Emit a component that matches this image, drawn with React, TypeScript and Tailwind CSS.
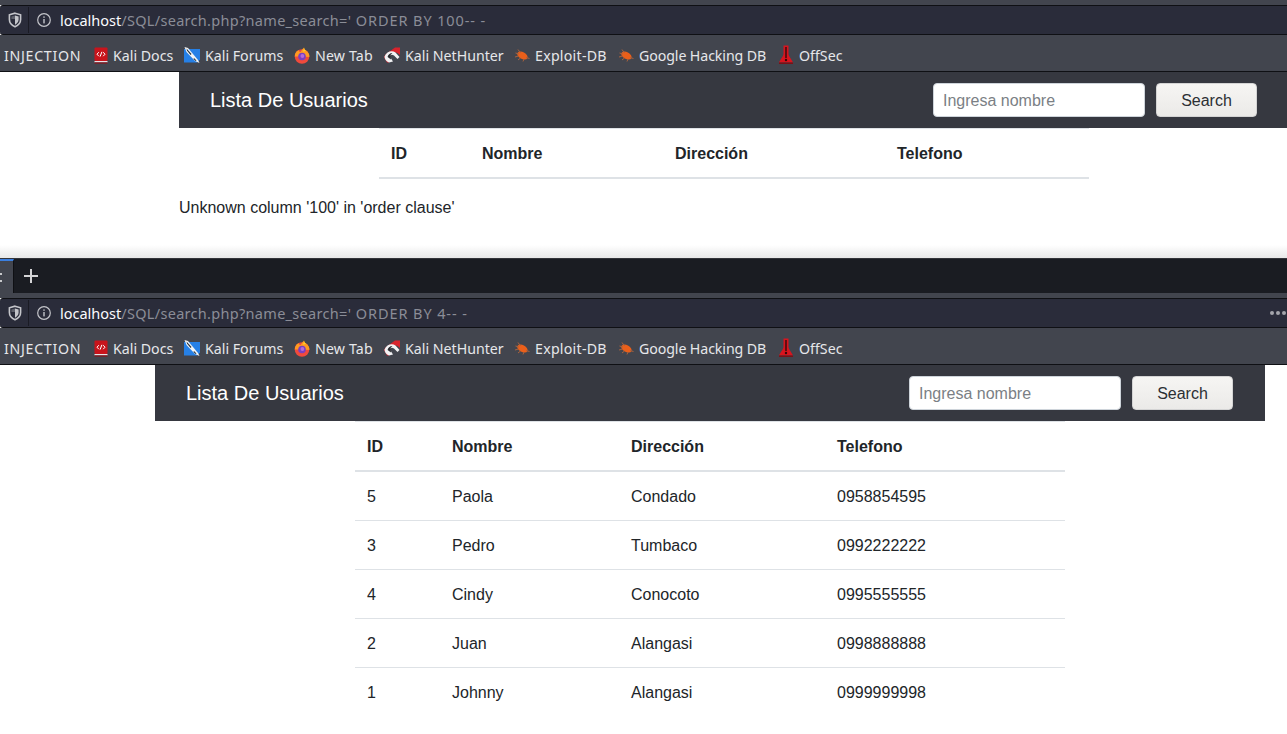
const browserFont = "font-['Noto_Sans',sans-serif]";

const rows = [
    ["5", "Paola", "Condado", "0958854595"],
    ["3", "Pedro", "Tumbaco", "0992222222"],
    ["4", "Cindy", "Conocoto", "0995555555"],
    ["2", "Juan", "Alangasi", "0998888888"],
    ["1", "Johnny", "Alangasi", "0999999998"],
];

function Shield() {
    return (
        <svg width="14" height="16" viewBox="0 0 14 16" className="shrink-0">
            <path
                d="M7 1.2 L12.6 2.8 V7.5 C12.6 11 10 13.5 7 14.8 C4 13.5 1.4 11 1.4 7.5 V2.8 Z"
                fill="none"
                stroke="#c4c5ca"
                strokeWidth="1.6"
            />
            <path d="M7 3.4 L10.6 4.4 V7.5 C10.6 9.8 9 11.6 7 12.8 Z" fill="#c4c5ca" />
            <path d="M7 3.4 L3.4 4.4 V7 H7 Z" fill="#c4c5ca" opacity="0.35" />
        </svg>
    );
}

function InfoIcon() {
    return (
        <svg width="16" height="16" viewBox="0 0 16 16" className="shrink-0">
            <circle cx="8" cy="8" r="6.3" fill="none" stroke="#c4c5ca" strokeWidth="1.2" />
            <rect x="7.3" y="7" width="1.4" height="4.4" fill="#c4c5ca" />
            <rect x="7.3" y="4.4" width="1.4" height="1.4" fill="#c4c5ca" />
        </svg>
    );
}

function DocsIcon() {
    return (
        <svg width="14" height="17" viewBox="0 0 14 17">
            <rect x="0.5" y="0.5" width="13" height="13.5" rx="1" fill="#c8141c" />
            <rect x="0.5" y="14" width="13" height="1.4" fill="#e4e4e8" />
            <rect x="0.5" y="15.4" width="13" height="1.2" fill="#8a1218" />
            <path d="M4.8 5.2 L3 7.2 L4.8 9.2 M9.2 5.2 L11 7.2 L9.2 9.2" fill="none" stroke="#fff" strokeWidth="1" />
            <path d="M7.9 4.8 L6.1 9.6" stroke="#fff" strokeWidth="1" />
        </svg>
    );
}

function ForumsIcon() {
    return (
        <svg width="16" height="16" viewBox="0 0 16 16">
            <path d="M0 2 H16 V12.5 L13 15.5 H0 Z" fill="#2680e6" />
            <path d="M0.5 0 L4 1 L14 13 L15.5 16 L11 14 L2.5 5 Z" fill="#f2f4f6" />
            <path d="M2.5 1.5 L7.5 7 L6.5 8 L3 3.5 Z" fill="#26303a" />
            <path d="M10 11 L12.5 13.5 L11.5 14 L9.5 12 Z" fill="#26303a" />
        </svg>
    );
}

function FirefoxIcon() {
    return (
        <svg width="16" height="17" viewBox="0 0 16 17">
            <circle cx="8" cy="9.5" r="7.3" fill="#f04a3c" />
            <path d="M0.8 9.5 A7.3 7.3 0 0 1 4.6 3 C4.8 4.4 5.6 5 6.6 5 C7.6 3.2 8.8 1.6 10 0.4 C10 2.2 11.8 3 13.2 4.4 C15.2 6.4 15.6 8.4 15.3 10 L8 9.5 Z" fill="#ff9a20" />
            <path d="M10.6 0.2 C10 2 10.4 3.2 12 4 L9 4.6 Z" fill="#ffd42a" />
            <circle cx="8" cy="9.5" r="3.8" fill="#7a3fc0" />
            <circle cx="8.4" cy="9" r="1.9" fill="#b56ad8" />
        </svg>
    );
}

function NetHunterIcon() {
    return (
        <svg width="16" height="16" viewBox="0 0 16 16">
            <path d="M1.5 7.5 L11 0.5 H16 V8 L13.5 6 C11 4.5 8 5 6.5 7 L5 15.5 H3 L0 10 Z" fill="#d8232c" />
            <path d="M0.5 9.5 C2.5 4.5 8 3 11.5 5.5 L15.5 10 L13.5 12 L10 8.5 C8 7 6.2 7.8 5.8 9.5 L9 14.5 L5 15.5 C2 14.5 0.5 12 0.5 9.5 Z" fill="#f2f2f4" />
            <path d="M3.6 10 C3.8 8 6 6 8.4 6 L6.5 8 L7 12.5 Z" fill="#2a2c30" />
        </svg>
    );
}

function BugIcon() {
    return (
        <svg width="16" height="14" viewBox="0 0 16 14">
            <ellipse cx="8.4" cy="7.6" rx="5.6" ry="3.4" transform="rotate(28 8.4 7.6)" fill="#ea5f1a" />
            <path d="M1.5 5 L5 6 M4 1.5 L6.5 5 M1 9 L4.5 8 M15.5 10.5 L12 9.5 M4 12 L6.5 10 M9 13.5 L10 11" stroke="#a8623e" strokeWidth="1" fill="none" />
        </svg>
    );
}

function OffSecIcon() {
    return (
        <svg width="14" height="20" viewBox="0 0 14 20">
            <path d="M4.5 0.5 H9.5 V9 C9.5 11 13 15 14 17.5 H0 C1 15 4.5 11 4.5 9 Z" fill="#d8141e" />
            <path d="M6.3 2 H7.7 V13 H6.3 Z" fill="#34090b" />
            <circle cx="7" cy="15" r="1.2" fill="#34090b" />
            <rect x="0" y="17.5" width="14" height="1.5" fill="#7a1016" />
        </svg>
    );
}

function Bookmark({ icon, label, labelClass }: { icon: React.ReactNode; label: string; labelClass: string }) {
    return (
        <div className="flex items-center">
            <span className="flex items-center justify-center w-[16px] h-[16px] mr-[4px]">{icon}</span>
            <span className={`whitespace-nowrap ${labelClass}`}>{label}</span>
        </div>
    );
}

function UrlBar({ query, dots }: { query: string; dots?: boolean }) {
    return (
        <div className="h-[30px] border-y border-[#0f1014] bg-[#2a2c3a] rounded-l-[3px] flex items-center pl-[8px]">
            <Shield />
            <div className="w-px h-[26px] bg-[#1a1b24] ml-[6px] mr-[7px]" />
            <InfoIcon />
            <span className={`ml-[8px] pt-[1px] text-[14.5px] whitespace-pre ${browserFont} text-[#fbfbfe]`}>
                localhost
                <span className="text-[#8b8d97] tracking-[0.3px]">/SQL/search.php?name_search='</span>
                <span className="text-[#8b8d97] tracking-[0.9px]">{query}</span>
            </span>
            {dots && (
                <div className="ml-auto mr-[1px] flex gap-[2px]">
                    <span className="w-[4px] h-[4px] rounded-full bg-[#a4a5ab]" />
                    <span className="w-[4px] h-[4px] rounded-full bg-[#a4a5ab]" />
                    <span className="w-[4px] h-[4px] rounded-full bg-[#a4a5ab]" />
                </div>
            )}
        </div>
    );
}

function BookmarksBar() {
    return (
        <div className={`h-[37px] pt-[5px] bg-[#42454e] border-b border-[#0f1014] flex items-center pl-[4px] text-[14.2px] text-[#e6e7ea] ${browserFont}`}>
            <span className="w-[89px] tracking-[0.7px]">INJECTION</span>
            <div className="flex gap-[12px]">
                <Bookmark icon={<DocsIcon />} label="Kali Docs" labelClass="w-[59px]" />
                <Bookmark icon={<ForumsIcon />} label="Kali Forums" labelClass="ml-px w-[77px]" />
                <Bookmark icon={<FirefoxIcon />} label="New Tab" labelClass="ml-px w-[57px] tracking-[0.15px]" />
                <Bookmark icon={<NetHunterIcon />} label="Kali NetHunter" labelClass="ml-px w-[97px]" />
                <Bookmark icon={<BugIcon />} label="Exploit-DB" labelClass="ml-px w-[71px] tracking-[0.25px]" />
                <Bookmark icon={<BugIcon />} label="Google Hacking DB" labelClass="ml-px w-[127px] tracking-[-0.1px]" />
                <Bookmark icon={<OffSecIcon />} label="OffSec" labelClass="ml-px w-[43px]" />
            </div>
        </div>
    );
}

function Navbar() {
    return (
        <div className="h-[56px] bg-[#363840] flex items-center justify-between pl-[31px] pr-[32px]">
            <span className="text-[20px] text-white">Lista De Usuarios</span>
            <div className="flex items-center gap-[11px]">
                <div className="w-[212px] h-[34px] pt-[1px] bg-white border border-[#ced4da] rounded-[4px] flex items-center pl-[9px] text-[#7b7f85]">
                    Ingresa nombre
                </div>
                <div className="w-[101px] h-[34px] pt-[1px] bg-linear-to-b from-[#f6f5f3] to-[#ebeae8] border border-[#d4d4d4] rounded-[4px] flex items-center justify-center text-[#2b2f33]">
                    Search
                </div>
            </div>
        </div>
    );
}

function HeaderCells({ widths }: { widths: string[] }) {
    const labels = ["ID", "Nombre", "Dirección", "Telefono"];
    return (
        <div className="flex h-[51px] pt-[1px] border-t border-b-2 border-[#dee2e6] items-center font-bold text-[#212529]">
            {labels.map((l, i) => (
                <div key={l} className={`pl-[12px] ${widths[i]}`}>
                    {l}
                </div>
            ))}
        </div>
    );
}

export default function App() {
    const topWidths = ["w-[91px]", "w-[193px]", "w-[222px]", "w-[204px]"];
    const bottomWidths = ["w-[85px]", "w-[179px]", "w-[206px]", "w-[240px]"];

    return (
        <div className="w-[1287px] h-[734px] overflow-hidden bg-white font-['Liberation_Sans',sans-serif] text-[16px] text-[#212529]">
            {/* top capture */}
            <div className="h-[258px] flex flex-col bg-linear-to-b from-white from-95% to-[#e8e8e8]">
                <div className="h-[5px] shrink-0 bg-[#42454e]" />
                <UrlBar query=" ORDER BY 100-- -" />
                <BookmarksBar />
                <div className="ml-[179px] w-[1110px]">
                    <Navbar />
                    <div className="ml-[200px] w-[710px]">
                        <HeaderCells widths={topWidths} />
                    </div>
                    <p className="mt-[17px]">Unknown column '100' in 'order clause'</p>
                </div>
            </div>

            {/* bottom capture */}
            <div className="h-[476px] flex flex-col">
                <div className="h-[35px] shrink-0 bg-[#1a1c22] border-t border-[#34353a] flex">
                    <div className="w-[14px] h-full bg-[#42454e] border-t-2 border-[#3b7fe0] border-r border-r-[#0f1014] flex flex-col justify-center gap-[5px]">
                        <span className="w-[2px] h-[2px] bg-[#c8c9cc]" />
                        <span className="w-[2px] h-[2px] bg-[#c8c9cc]" />
                    </div>
                    <div className="ml-[9px] flex items-center">
                        <svg width="16" height="16" viewBox="0 0 16 16">
                            <path d="M8 1 V15 M1 8 H15" stroke="#d4d4d6" strokeWidth="2" />
                        </svg>
                    </div>
                </div>
                <div className="h-[5px] shrink-0 bg-[#42454e]" />
                <UrlBar query=" ORDER BY 4-- -" dots />
                <BookmarksBar />
                <div className="ml-[155px] w-[1110px]">
                    <Navbar />
                    <div className="ml-[200px] w-[710px]">
                        <HeaderCells widths={bottomWidths} />
                        {rows.map((row, r) => (
                            <div key={row[0]} className={`flex h-[49px] items-center ${r < rows.length - 1 ? "pt-[1px] border-b border-[#dee2e6]" : ""}`}>
                                {row.map((c, i) => (
                                    <div key={i} className={`pl-[12px] ${bottomWidths[i]}`}>
                                        {c}
                                    </div>
                                ))}
                            </div>
                        ))}
                    </div>
                </div>
            </div>
        </div>
    );
}
